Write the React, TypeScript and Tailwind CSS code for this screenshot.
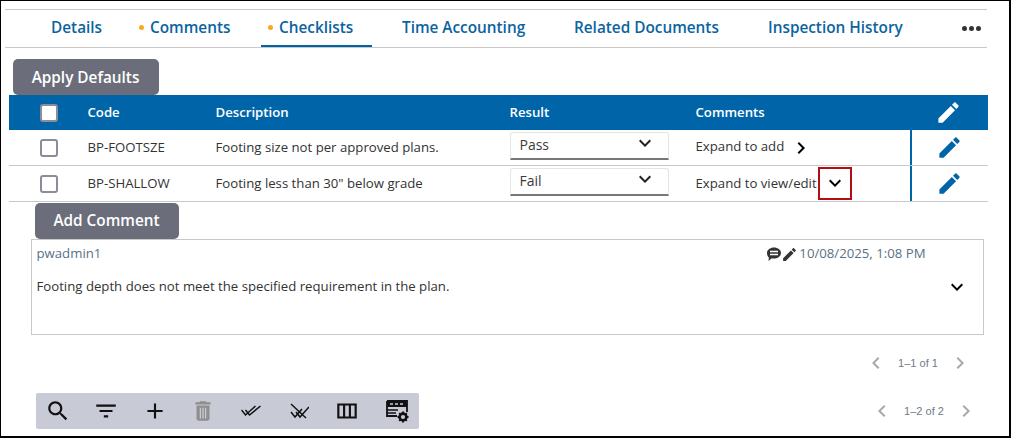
const font = { fontFamily: '"Open Sans", sans-serif' };

function Icon({ d, size = 24, className = "", vb = "0 0 24 24" }: { d: string; size?: number; className?: string; vb?: string }) {
  return (
    <svg width={size} height={size} viewBox={vb} fill="currentColor" className={"shrink-0 " + className}>
      <path d={d} />
    </svg>
  );
}

const EDIT = "M3 17.25V21h3.75L17.81 9.94l-3.75-3.75L3 17.25zM20.71 7.04c.39-.39.39-1.02 0-1.41l-2.34-2.34c-.39-.39-1.02-.39-1.41 0l-1.83 1.83 3.75 3.75 1.83-1.83z";
const DOWN = "M7.41 8.59 12 13.17l4.59-4.58L18 10l-6 6-6-6z";
const RIGHT = "M8.59 16.59 13.17 12 8.59 7.41 10 6l6 6-6 6z";
const LEFT = "M15.41 16.59 10.83 12l4.58-4.59L14 6l-6 6 6 6z";

function Tab({ label, dot, active, className }: { label: string; dot?: boolean; active?: boolean; className: string }) {
  return (
    <div className={"h-full flex items-center text-[15.33px] font-semibold text-[#0b64a0] border-b-2 " + (active ? "border-[#0065a8] " : "border-transparent ") + className}>
      {dot && <span className="w-[5px] h-[5px] rounded-full bg-[#f9a825] mr-[6px]" />}
      {label}
    </div>
  );
}

function Check() {
  return <div className="w-[18px] h-[18px] rounded-[3px] border-2 border-[#8b8d9b] bg-white" />;
}

function Select({ value }: { value: string }) {
  return (
    <div className="w-[159px] h-[28px] flex items-center justify-between pl-[9px] pr-[11px] text-[14px] text-[#3a3a3a] bg-white rounded-t-[3px] border border-[#e4e4e4] border-b-2 border-b-[#777]">
      <span className="-mt-[2px]">{value}</span>
      <Icon d={DOWN} size={24} className="text-[#222] -mt-[5px]" />
    </div>
  );
}

function Row({ code, desc, result, children }: { code: string; desc: string; result: string; children: React.ReactNode }) {
  return (
    <div className="h-[36px] grid grid-cols-[79px_128px_294px_186px_214px_1fr] items-center border-b border-[#c8c8c8] text-[13.2px] text-[#333]">
      <div className="pl-[31px]"><Check /></div>
      <div>{code}</div>
      <div>{desc}</div>
      <div className="-mt-[3px] h-full flex items-center"><Select value={result} /></div>
      <div className="flex items-center h-full">{children}</div>
      <div className="h-full border-l-2 border-[#0065a8] flex items-center justify-center pr-[1px]">
        <Icon d={EDIT} size={27} className="text-[#0065a8]" />
      </div>
    </div>
  );
}

function Pager({ text, className }: { text: string; className: string }) {
  return (
    <div className={"flex items-center justify-end text-[11px] text-[#6f7a86] " + className} style={{ fontFamily: '"Liberation Sans", sans-serif' }}>
      <Icon d={LEFT} size={24} className="text-[#a8a8a8]" />
      <span className="w-[60px] text-center">{text}</span>
      <Icon d={RIGHT} size={24} className="text-[#a8a8a8]" />
    </div>
  );
}

export default function App() {
  return (
    <div className="w-[1011px] h-[438px] overflow-hidden bg-white border-t border-l-[1.5px] border-r-2 border-b-2 border-black" style={font}>
      <div className="pl-[4px] pr-[21px] pt-[8px]">
        <div className="h-[39px] flex items-center border-y border-[#c8c8c8] w-[982px]">
          <Tab label="Details" className="w-[124px] pl-[46px]" />
          <Tab label="Comments" dot className="w-[132px] pl-[10px]" />
          <Tab label="Checklists" dot active className="w-[111px] pl-[7px]" />
          <Tab label="Time Accounting" className="w-[172px] pl-[30px]" />
          <Tab label="Related Documents" className="w-[194px] pl-[30px]" />
          <Tab label="Inspection History" className="w-[190px] pl-[30px]" />
          <div className="flex-1 flex justify-end gap-[2px] pr-[6px]">
            <span className="w-[5px] h-[5px] rounded-full bg-[#333]" />
            <span className="w-[5px] h-[5px] rounded-full bg-[#333]" />
            <span className="w-[5px] h-[5px] rounded-full bg-[#333]" />
          </div>
        </div>
      </div>

      <div className="pl-[11.5px] mt-[11px]">
        <button className="w-[146px] h-[36px] rounded-[5px] bg-[#6b6e7a] text-white font-semibold text-[15.33px] block">Apply Defaults</button>
      </div>

      <div className="pl-[7.5px] w-[986.5px]">
        <div className="h-[35px] bg-[#0065a8] text-white font-semibold text-[13.2px] grid grid-cols-[79px_128px_294px_186px_214px_1fr] items-center">
          <div className="pl-[31px]"><Check /></div>
          <div>Code</div>
          <div>Description</div>
          <div>Result</div>
          <div>Comments</div>
          <div className="flex justify-center pr-[1px]"><Icon d={EDIT} size={27} className="text-white" /></div>
        </div>
        <Row code="BP-FOOTSZE" desc="Footing size not per approved plans." result="Pass">
          <span className="-mt-[1px]">Expand to add</span>
          <Icon d={RIGHT} size={24} className="text-black ml-[5px]" />
        </Row>
        <Row code="BP-SHALLOW" desc={'Footing less than 30" below grade'} result="Fail">
          <span>Expand to view/edit</span>
          <div className="w-[34px] h-[33px] ml-[1px] -mt-[1px] border-[2px] border-[#b00f14] flex items-center justify-center">
            <Icon d={DOWN} size={24} className="text-black" />
          </div>
        </Row>
      </div>

      <div className="pl-[33.5px] mt-[1px]">
        <button className="w-[144px] h-[36px] rounded-[5px] bg-[#6b6e7a] text-white font-semibold text-[15.33px] block pb-[2px]">Add Comment</button>
      </div>

      <div className="ml-[29.5px] w-[953px] h-[96px] border border-[#c8c8c8] pl-[5px] pr-[14px] pt-[5px]">
        <div className="flex items-center justify-between text-[13.2px] text-[#5a7184] h-[18px]">
          <span>pwadmin1</span>
          <div className="flex items-center pr-[43px]">
            <svg width="16" height="16" viewBox="0 0 16 16" className="text-[#333] shrink-0">
              <path fill="currentColor" d="M8 1.500c3.900 0 7 2.400 7 5.500s-3.100 5.500-7 5.500c-.8 0-1.500-.1-2.200-.3L2.500 15l.4-3.400C1.700 10.600 1 8.900 1 7c0-3.100 3.100-5.500 7-5.500z" />
              <path stroke="#fff" strokeWidth="1.400" d="M4 5.500h8M4 8.500h8" />
            </svg>
            <Icon d={EDIT} size={17} className="text-[#333] -ml-[1px]" />
            <span className="ml-[1px]">10/08/2025, 1:08 PM</span>
          </div>
        </div>
        <div className="flex items-center justify-between mt-[12px] text-[13.2px] text-[#333]">
          <span>Footing depth does not meet the specified requirement in the plan.</span>
          <Icon d={DOWN} size={24} className="text-black" />
        </div>
      </div>

      <Pager text="1–1 of 1" className="mt-[16px] w-[971px] h-[24px]" />

      <div className="flex items-center mt-[18px] w-[977px]">
        <div className="ml-[34.5px] w-[383px] h-[36px] rounded-[2px] bg-[#c8cad6] flex items-center text-[#111]">
          <div className="w-[46px] flex justify-center">
            <Icon size={26} d="M15.5 14h-.79l-.28-.27C15.410 12.590 16 11.110 16 9.500 16 5.910 13.090 3 9.500 3S3 5.910 3 9.500 5.910 16 9.500 16c1.610 0 3.090-.59 4.230-1.570l.27.28v.79l5 4.990L20.490 19l-4.990-5zm-6 0C7.010 14 5 11.990 5 9.500S7.010 5 9.500 5 14 7.010 14 9.500 11.990 14 9.500 14z" />
          </div>
          <div className="w-[50px] flex justify-center">
            <Icon size={26} d="M10 18h4v-2h-4v2zM3 6v2h18V6H3zm3 7h12v-2H6v2z" />
          </div>
          <div className="w-[48px] flex justify-center">
            <Icon size={26} d="M19 13h-6v6h-2v-6H5v-2h6V5h2v6h6v2z" />
          </div>
          <div className="w-[48px] flex justify-center">
            <Icon size={26} className="text-[#8f8f8f]" d="M6 19c0 1.100.9 2 2 2h8c1.100 0 2-.9 2-2V7H6v12zM9 9h1.200v10H9V9zm2.400 0h1.200v10h-1.200V9zM15 9v10h-1.200V9H15zM15.500 4l-1-1h-5l-1 1H5v2h14V4h-3.500z" />
          </div>
          <div className="w-[48px] flex justify-center">
            <svg width="20" height="12" viewBox="0 0 20 12" fill="none" stroke="currentColor" strokeWidth="1.500">
              <path d="M.5 5l4 5 10-9" />
              <path d="M4.500 5l4 5 11-9" />
            </svg>
          </div>
          <div className="w-[48px] flex justify-center">
            <svg width="20" height="16" viewBox="0 0 20 16" fill="none" stroke="currentColor" strokeWidth="1.500">
              <path d="M2 9l4 5 7-8" />
              <path d="M7 9l4 5 9-10" />
              <path d="M2 1l15 14" />
            </svg>
          </div>
          <div className="w-[49px] flex justify-center">
            <Icon size={26} d="M3 5v14h18V5H3zm5.330 12H5V7h3.330v10zm5.340 0h-3.340V7h3.340v10zM19 17h-3.330V7H19v10z" />
          </div>
          <div className="w-[47px] flex justify-center pl-[3px]">
            <svg width="26" height="26" viewBox="0 0 26 26" fill="none">
              <path d="M3 3h20v11" stroke="currentColor" strokeWidth="1.800" />
              <path d="M3 3v15h10" stroke="currentColor" strokeWidth="1.800" />
              <path d="M3 3h20v6H3z" fill="currentColor" />
              <path d="M6 6h3M11 6h3M16 6h3" stroke="#c8cad6" strokeWidth="1.500" />
              <path d="M3 12h11M3 15h9" stroke="currentColor" strokeWidth="1.300" />
              <circle cx="19" cy="19" r="3.400" fill="none" stroke="currentColor" strokeWidth="2.600" />
              <path d="M19 13.500v2M19 22.500v2M13.500 19h2M22.500 19h2M15.200 15.200l1.400 1.400M21.400 21.400l1.400 1.400M22.800 15.200l-1.400 1.400M16.600 21.400l-1.400 1.400" stroke="currentColor" strokeWidth="1.800" />
            </svg>
          </div>
        </div>
        <Pager text="1–2 of 2" className="flex-1 h-[24px]" />
      </div>
    </div>
  );
}
